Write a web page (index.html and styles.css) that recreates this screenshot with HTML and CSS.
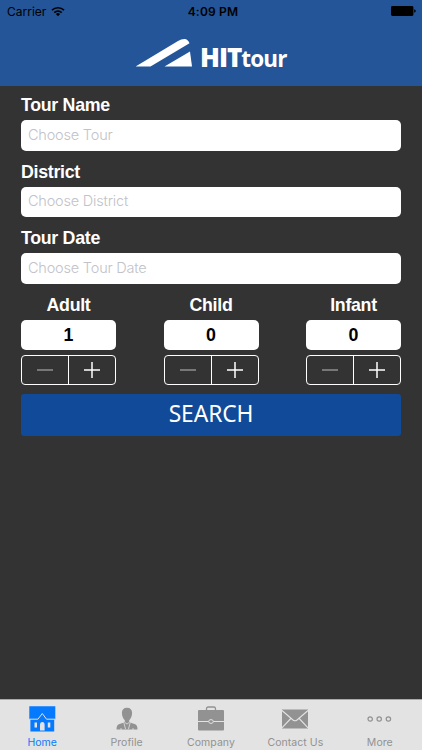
FILE: index.html
```html
<!DOCTYPE html>
<html lang="en">
<head>
    <meta charset="UTF-8">
    <title>HITtour</title>
    <link rel="stylesheet" href="styles.css">
</head>
<body>

<header class="header">
    <div class="status">
        <div class="carrier">
            <span>Carrier</span>
            <svg width="14" height="11" viewBox="0 0 14 11">
                <g fill="none" stroke="#000" stroke-width="1.7">
                    <path d="M1 4.2a8.6 8.6 0 0 1 12 0"/>
                    <path d="M3.3 6.6a5.3 5.3 0 0 1 7.4 0"/>
                </g>
                <path d="M4.9 8.1a3 3 0 0 1 4.2 0L7 10.3z"/>
            </svg>
        </div>
        <div class="time">4:09 PM</div>
        <div class="battery">
            <svg width="25" height="10" viewBox="0 0 25 10">
                <rect width="22.4" height="10" rx="1.4"/>
                <path d="M23.2 3.3q1.6.4 1.6 1.7t-1.6 1.7z"/>
            </svg>
        </div>
    </div>
    <div class="logo">
        <svg width="57" height="29" viewBox="0 0 57 29">
            <path fill="#fff" d="M-.5 27.6L42 2Q45 0 48.5 0Q52 .3 53.5 4.2L14.5 27.6z"/>
            <path fill="#fff" d="M28.5 27.6L54 12.5L56 27.6z"/>
        </svg>
        <div class="brand"><span class="brand-hit">HIT</span><span class="brand-tour">tour</span></div>
    </div>
</header>

<main class="form">
    <label class="label" for="tour">Tour Name</label>
    <input class="field" id="tour" placeholder="Choose Tour">
    <label class="label" for="district">District</label>
    <input class="field" id="district" placeholder="Choose District">
    <label class="label" for="date">Tour Date</label>
    <input class="field" id="date" placeholder="Choose Tour Date">

    <div class="counters">
        <div class="counter">
            <div class="label">Adult</div>
            <div class="count">1</div>
            <div class="stepper">
                <button class="minus"><svg width="16" height="16"><path d="M0 8h16"/></svg></button>
                <button class="plus"><svg width="16" height="16"><path d="M0 8h16M8 0v16"/></svg></button>
            </div>
        </div>
        <div class="counter">
            <div class="label">Child</div>
            <div class="count">0</div>
            <div class="stepper">
                <button class="minus"><svg width="16" height="16"><path d="M0 8h16"/></svg></button>
                <button class="plus"><svg width="16" height="16"><path d="M0 8h16M8 0v16"/></svg></button>
            </div>
        </div>
        <div class="counter">
            <div class="label">Infant</div>
            <div class="count">0</div>
            <div class="stepper">
                <button class="minus"><svg width="16" height="16"><path d="M0 8h16"/></svg></button>
                <button class="plus"><svg width="16" height="16"><path d="M0 8h16M8 0v16"/></svg></button>
            </div>
        </div>
    </div>

    <button class="search"><span>SEARCH</span></button>
</main>

<nav class="tabs">
    <a class="tab active">
        <svg width="28" height="28" viewBox="0 0 28 28">
            <path fill="currentColor" d="M1.3 1.3h26v13h-1.1V26.5H2.4V14.3H1.3z"/>
            <path fill="none" stroke="#e3e3e3" d="M1.3 14.2h8.6L14.3 8.5l4.2 5.7h8.7"/>
            <path fill="#e3e3e3" d="M12 25.5V20q0-3 2.3-3t2.3 3v5.5zM6.5 17.5H9v5H6.5zM19.8 17.5h2.5v5h-2.5z"/>
        </svg>
        <span>Home</span>
    </a>
    <a class="tab">
        <svg width="28" height="28" viewBox="0 0 28 28">
            <path fill="currentColor" d="M14 2.8c3.4 0 5.1 2 5.1 5 0 3.500-1.400 6-2.900 7.400v2l6 2.100q2.300 1 2.300 5.300h-21q0-4.300 2.300-5.300l6-2.100v-2C10.300 13.800 8.900 11.300 8.900 7.800c0-3 1.700-5 5.100-5z"/>
            <path fill="none" stroke="#e3e3e3" stroke-width=".8" d="M10.8 17.500l1.700 6.500M17.200 17.500l-1.700 6.500M12 17.500l2 1.600 2-1.600M8 23v2M20 23v2"/>
        </svg>
        <span>Profile</span>
    </a>
    <a class="tab">
        <svg width="28" height="28" viewBox="0 0 28 28">
            <path fill="none" stroke="currentColor" stroke-width="1.3" d="M9.5 5V3.8Q9.5 2 11.3 2h5.4q1.8 0 1.8 1.8V5"/>
            <rect x="1" y="5" width="26" height="20.5" rx="1" fill="currentColor"/>
            <path stroke="#e3e3e3" d="M1 16.5h26"/>
            <ellipse cx="14" cy="16.5" rx="2.3" ry="1.9" fill="currentColor" stroke="#e3e3e3"/>
        </svg>
        <span>Company</span>
    </a>
    <a class="tab">
        <svg width="28" height="28" viewBox="0 0 28 28">
            <path fill="currentColor" d="M1 4.5h26v19H1z"/>
            <path fill="none" stroke="#e3e3e3" stroke-width="1.1" d="M1 5.5l11 9.5q2 1.6 4 0L27 5.5M1 22.8l8.8-9.3M27 22.8l-8.8-9.3"/>
        </svg>
        <span>Contact Us</span>
    </a>
    <a class="tab">
        <svg width="28" height="28" viewBox="0 0 28 28">
            <g fill="none" stroke="currentColor" stroke-width="1.2">
                <circle cx="4.2" cy="14" r="2.2"/>
                <circle cx="13.2" cy="14" r="2.2"/>
                <circle cx="22.4" cy="14" r="2.2"/>
            </g>
        </svg>
        <span>More</span>
    </a>
</nav>

</body>
</html>
```
FILE: styles.css
```css
* {
    box-sizing: border-box;
}
body {
    margin: 0;
    height: 750px;
    display: flex;
    flex-direction: column;
    background: #333;
    font-family: Inter, sans-serif;
    overflow: hidden;
}
button {
    padding: 0;
    border: 0;
    background: none;
}
svg {
    display: block;
}
.header {
    height: 86px;
    background: #235598;
}
.status {
    display: grid;
    grid-template-columns: 1fr auto 1fr;
    align-items: center;
    height: 22px;
    padding: 0 6px 0 7px;
    font-size: 12px;
    color: #000;
}
.carrier {
    display: flex;
    align-items: center;
    gap: 5px;
}
.time {
    padding-left: 3px;
    font-weight: 600;
    letter-spacing: 0.2px;
}
.battery {
    justify-self: end;
}
.logo {
    display: flex;
    height: 64px;
    padding: 17px 0 0 136px;
}
.brand {
    display: flex;
    align-items: baseline;
    margin-left: 7px;
    padding-top: 2px;
    line-height: 32px;
    color: #fff;
    font-family: "Open Sans", sans-serif;
    font-weight: 700;
}
.brand-hit {
    font-size: 26px;
    font-weight: 800;
    letter-spacing: -1px;
}
.brand-tour {
    font-size: 22.5px;
    letter-spacing: -0.9px;
}
.form {
    flex: 1;
    padding: 4px 21px 0;
}
.label {
    display: block;
    height: 30px;
    line-height: 30px;
    color: #fff;
    font-family: "Liberation Sans", Arial, sans-serif;
    font-size: 17.8px;
    letter-spacing: -0.3px;
    font-weight: bold;
}
.field {
    display: block;
    width: 100%;
    height: 30.5px;
    margin: 0 0 6px;
    padding: 0 7px 2px;
    border: 0;
    border-radius: 5px;
    background: #fff;
    font-family: Inter, sans-serif;
    font-size: 14.5px;
    font-weight: 300;
    letter-spacing: -0.2px;
}
.field::placeholder {
    color: #c2c2c8;
    opacity: 1;
}
.counters {
    display: flex;
    justify-content: space-between;
}
.counter {
    width: 95px;
    text-align: center;
}
.count {
    height: 30.5px;
    line-height: 30px;
    border-radius: 5px;
    background: #fff;
    color: #000;
    font-family: "Liberation Sans", Arial, sans-serif;
    font-size: 17.8px;
    font-weight: bold;
}
.stepper {
    display: flex;
    height: 30px;
    margin-top: 4.5px;
    border: 1px solid #fff;
    border-radius: 4px;
}
.stepper button {
    flex: 1;
    display: flex;
    align-items: center;
    justify-content: center;
    stroke: #fff;
    stroke-width: 1.5;
}
.stepper .minus {
    border-right: 1px solid #fff;
    stroke: #8f8f8f;
}
.search {
    display: block;
    width: 100%;
    height: 42px;
    margin-top: 9.4px;
    padding-bottom: 2px;
    border-radius: 3px;
    background: #104a99;
    color: #fff;
    font-family: "Noto Sans", sans-serif;
    font-size: 22.8px;
    line-height: 38px;
    letter-spacing: -0.1px;
}
.tabs {
    display: grid;
    grid-template-columns: repeat(5, 1fr);
    height: 51px;
    border-top: 1px solid #aaa;
    background: #e3e3e3;
}
.tab {
    display: flex;
    flex-direction: column;
    align-items: center;
    padding-top: 5px;
    color: #929292;
    font-size: 10.5px;
    line-height: 20px;
    letter-spacing: 0.05px;
}
.tab.active {
    color: #067aff;
}
```
